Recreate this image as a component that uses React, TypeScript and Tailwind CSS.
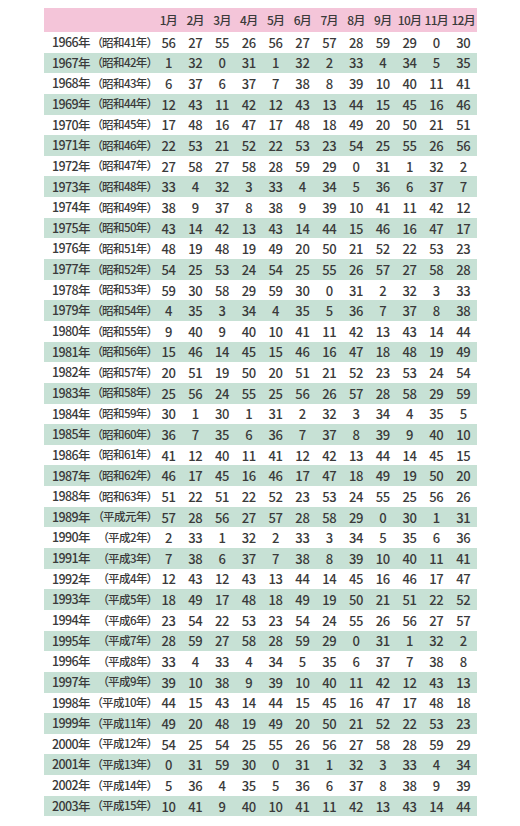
const rows: [number, string, number[]][] = [
  [1966, "昭和41年", [56, 27, 55, 26, 56, 27, 57, 28, 59, 29, 0, 30]],
  [1967, "昭和42年", [1, 32, 0, 31, 1, 32, 2, 33, 4, 34, 5, 35]],
  [1968, "昭和43年", [6, 37, 6, 37, 7, 38, 8, 39, 10, 40, 11, 41]],
  [1969, "昭和44年", [12, 43, 11, 42, 12, 43, 13, 44, 15, 45, 16, 46]],
  [1970, "昭和45年", [17, 48, 16, 47, 17, 48, 18, 49, 20, 50, 21, 51]],
  [1971, "昭和46年", [22, 53, 21, 52, 22, 53, 23, 54, 25, 55, 26, 56]],
  [1972, "昭和47年", [27, 58, 27, 58, 28, 59, 29, 0, 31, 1, 32, 2]],
  [1973, "昭和48年", [33, 4, 32, 3, 33, 4, 34, 5, 36, 6, 37, 7]],
  [1974, "昭和49年", [38, 9, 37, 8, 38, 9, 39, 10, 41, 11, 42, 12]],
  [1975, "昭和50年", [43, 14, 42, 13, 43, 14, 44, 15, 46, 16, 47, 17]],
  [1976, "昭和51年", [48, 19, 48, 19, 49, 20, 50, 21, 52, 22, 53, 23]],
  [1977, "昭和52年", [54, 25, 53, 24, 54, 25, 55, 26, 57, 27, 58, 28]],
  [1978, "昭和53年", [59, 30, 58, 29, 59, 30, 0, 31, 2, 32, 3, 33]],
  [1979, "昭和54年", [4, 35, 3, 34, 4, 35, 5, 36, 7, 37, 8, 38]],
  [1980, "昭和55年", [9, 40, 9, 40, 10, 41, 11, 42, 13, 43, 14, 44]],
  [1981, "昭和56年", [15, 46, 14, 45, 15, 46, 16, 47, 18, 48, 19, 49]],
  [1982, "昭和57年", [20, 51, 19, 50, 20, 51, 21, 52, 23, 53, 24, 54]],
  [1983, "昭和58年", [25, 56, 24, 55, 25, 56, 26, 57, 28, 58, 29, 59]],
  [1984, "昭和59年", [30, 1, 30, 1, 31, 2, 32, 3, 34, 4, 35, 5]],
  [1985, "昭和60年", [36, 7, 35, 6, 36, 7, 37, 8, 39, 9, 40, 10]],
  [1986, "昭和61年", [41, 12, 40, 11, 41, 12, 42, 13, 44, 14, 45, 15]],
  [1987, "昭和62年", [46, 17, 45, 16, 46, 17, 47, 18, 49, 19, 50, 20]],
  [1988, "昭和63年", [51, 22, 51, 22, 52, 23, 53, 24, 55, 25, 56, 26]],
  [1989, "平成元年", [57, 28, 56, 27, 57, 28, 58, 29, 0, 30, 1, 31]],
  [1990, "平成2年", [2, 33, 1, 32, 2, 33, 3, 34, 5, 35, 6, 36]],
  [1991, "平成3年", [7, 38, 6, 37, 7, 38, 8, 39, 10, 40, 11, 41]],
  [1992, "平成4年", [12, 43, 12, 43, 13, 44, 14, 45, 16, 46, 17, 47]],
  [1993, "平成5年", [18, 49, 17, 48, 18, 49, 19, 50, 21, 51, 22, 52]],
  [1994, "平成6年", [23, 54, 22, 53, 23, 54, 24, 55, 26, 56, 27, 57]],
  [1995, "平成7年", [28, 59, 27, 58, 28, 59, 29, 0, 31, 1, 32, 2]],
  [1996, "平成8年", [33, 4, 33, 4, 34, 5, 35, 6, 37, 7, 38, 8]],
  [1997, "平成9年", [39, 10, 38, 9, 39, 10, 40, 11, 42, 12, 43, 13]],
  [1998, "平成10年", [44, 15, 43, 14, 44, 15, 45, 16, 47, 17, 48, 18]],
  [1999, "平成11年", [49, 20, 48, 19, 49, 20, 50, 21, 52, 22, 53, 23]],
  [2000, "平成12年", [54, 25, 54, 25, 55, 26, 56, 27, 58, 28, 59, 29]],
  [2001, "平成13年", [0, 31, 59, 30, 0, 31, 1, 32, 3, 33, 4, 34]],
  [2002, "平成14年", [5, 36, 4, 35, 5, 36, 6, 37, 8, 38, 9, 39]],
  [2003, "平成15年", [10, 41, 9, 40, 10, 41, 11, 42, 13, 43, 14, 44]],
];

const months = ["1月", "2月", "3月", "4月", "5月", "6月", "7月", "8月", "9月", "10月", "11月", "12月"];

function Row({ year, era, values, shaded }: { year: number; era: string; values: number[]; shaded: boolean }) {
  return (
    <div className={`flex items-center h-[20.65px] ${shaded ? "bg-[#c7e1d5]" : "bg-white"}`}>
      <div className="w-[49px] pl-[8px] whitespace-nowrap text-[12.5px] tracking-[-0.05em]">{year}年</div>
      <div className="w-[62px] pr-[3px] text-right whitespace-nowrap text-[11.5px] tracking-[-0.05em]">（{era}）</div>
      {values.map((v, i) => (
        <div key={i} className="w-[26.8px] text-center">
          {v}
        </div>
      ))}
    </div>
  );
}

export default function App() {
  return (
    <div className="w-[520px] h-[826px] bg-white pt-[8px] pl-[44px] font-['Noto_Sans_CJK_JP',sans-serif] font-medium [font-feature-settings:'palt'] text-[13px] leading-none tracking-[-0.03em] text-[#3a3a3a]">
      <div className="w-[433px]">
        <div className="flex items-center h-[24px] bg-[#f4c5d9]">
          <div className="w-[111px]" />
          {months.map((m) => (
            <div key={m} className="w-[26.8px] text-center whitespace-nowrap text-[12px] tracking-[-0.06em]">
              {m}
            </div>
          ))}
        </div>
        {rows.map(([year, era, values], i) => (
          <Row key={year} year={year} era={era} values={values} shaded={i % 2 === 1} />
        ))}
      </div>
    </div>
  );
}
